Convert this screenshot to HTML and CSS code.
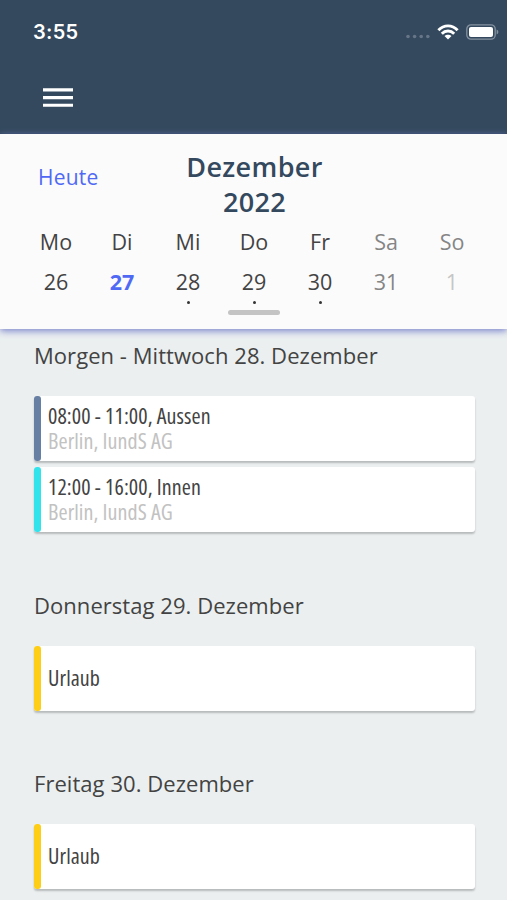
FILE: index.html
```html
<!DOCTYPE html>
<html lang="de">
<head>
<meta charset="utf-8">
<meta name="viewport" content="width=device-width, initial-scale=1">
<title>Kalender</title>
<link rel="stylesheet" href="styles.css">
</head>
<body>
<header class="topbar">
  <div class="status">
    <span class="clock">3:55</span>
    <div class="indicators">
      <svg class="signal" width="24" height="5" viewBox="0 0 24 5"><g fill="#667687"><circle cx="2" cy="2.5" r="1.8"/><circle cx="8.6" cy="2.5" r="1.8"/><circle cx="15.2" cy="2.5" r="1.8"/><circle cx="21.8" cy="2.5" r="1.8"/></g></svg>
      <svg class="wifi" width="22" height="16" viewBox="0 0 22 16"><g fill="none" stroke="#fff" stroke-width="2.9"><path d="M1.4 6.2C6.8.4 15.2.4 20.6 6.2"/><path d="M4.8 9.7C8.4 6 13.6 6 17.2 9.7"/></g><path d="M11 15.6L7.5 12.1C9.4 10.2 12.6 10.2 14.5 12.1Z" fill="#fff"/></svg>
      <svg class="battery" width="33" height="16" viewBox="0 0 33 16"><rect x=".8" y=".8" width="28.4" height="14.4" rx="4.2" fill="none" stroke="#8492a0" stroke-width="1.3"/><rect x="3" y="3" width="24" height="10" rx="2" fill="#fff"/><path d="M30.6 5.4Q32.4 6.2 32.4 8T30.6 10.6Z" fill="#8492a0"/></svg>
    </div>
  </div>
  <svg class="menu" width="30" height="20" viewBox="0 0 30 20"><path d="M0 1.9H30M0 9.6H30M0 17.2H30" stroke="#fff" stroke-width="3.1"/></svg>
</header>
<section class="calendar">
  <div class="calendar-head">
    <a class="today">Heute</a>
    <h1 class="month">Dezember<br>2022</h1>
  </div>
  <div class="week names"><span>Mo</span><span>Di</span><span>Mi</span><span>Do</span><span>Fr</span><span class="dim">Sa</span><span class="dim">So</span></div>
  <div class="week days"><span>26</span><span class="current">27</span><span class="marked">28</span><span class="marked">29</span><span class="marked">30</span><span class="dim">31</span><span class="faint">1</span></div>
  <div class="handle"></div>
</section>
<main class="agenda">
  <section class="day">
    <h2>Morgen - Mittwoch 28. Dezember</h2>
    <article class="card slate"><p>08:00 - 11:00, Aussen</p><p class="place">Berlin, IundS AG</p></article>
    <article class="card cyan"><p>12:00 - 16:00, Innen</p><p class="place">Berlin, IundS AG</p></article>
  </section>
  <section class="day">
    <h2>Donnerstag 29. Dezember</h2>
    <article class="card yellow"><p>Urlaub</p></article>
  </section>
  <section class="day">
    <h2>Freitag 30. Dezember</h2>
    <article class="card yellow"><p>Urlaub</p></article>
  </section>
</main>
</body>
</html>
```
FILE: styles.css
```css
* { box-sizing: border-box; }
body {
  margin: 0;
  height: 900px;
  overflow: hidden;
  background: #ebeff0;
  color: #434343;
  font-family: "Open Sans", "Noto Sans", sans-serif;
}
h1, h2, p { margin: 0; font-weight: 400; }
svg { display: block; }
.topbar { height: 134px; background: #34495e; border-bottom: 1px solid #2d4258; }
.status {
  display: flex;
  justify-content: space-between;
  height: 64px;
  padding: 0 8px 0 33px;
  align-items: center;
}
.clock { font: 600 20px/24px Inter, sans-serif; color: #fff; letter-spacing: .3px; }
.indicators { display: flex; align-items: center; }
.signal { margin: 9px 7px 0 0; }
.wifi { margin-right: 7px; }
.menu { margin: 24px 0 0 43px; }
.calendar {
  position: relative;
  height: 195px;
  background: #fbfbfc;
  box-shadow: 0 2px 7px #7a84cc;
}
.calendar-head { display: grid; grid-template-columns: 1fr 160px 1fr; height: 88px; padding: 15px 0 0; }
.today { padding: 14px 0 0 38px; font-size: 21px; line-height: 28px; color: #5069f5; letter-spacing: .2px; }
.month { font-size: 27px; font-weight: 600; line-height: 35px; text-align: center; color: #34495e; letter-spacing: .35px; margin-left: 2px; white-space: nowrap; }
.week { display: grid; grid-template-columns: repeat(7, 1fr); padding: 0 22px 0 23px; text-align: center; font-size: 21.5px; line-height: 40px; }
.week span { position: relative; }
.dim { color: #858585; }
.faint { color: #c6c6c6; }
.current { color: #5069f5; font-weight: 700; }
.marked::after { content: ""; position: absolute; left: 50%; top: 39px; width: 3px; height: 3px; margin-left: -1px; border-radius: 50%; background: #333; }
.handle { width: 52px; height: 5px; margin: 8px auto 0; border-radius: 3px; background: #c4c4c4; }
.agenda { padding: 11px 32px 0 34px; }
.day { margin-bottom: 57.2px; }
.day:last-child { margin-bottom: 0; }
h2 { font-size: 22px; line-height: 30px; margin-bottom: 26px; white-space: nowrap; letter-spacing: .05px; }
.card {
  position: relative;
  display: flex;
  flex-direction: column;
  justify-content: center;
  height: 65px;
  margin-bottom: 6.4px;
  padding: 0 0 1px 14px;
  border-radius: 3px;
  background: #fff;
  box-shadow: 0 2px 2px rgba(0, 0, 0, .22);
  font-size: 22px;
  line-height: 25px;
  letter-spacing: .07px;
  font-stretch: 75%;
}
.card:last-child { margin-bottom: 0; }
.card::before { content: ""; position: absolute; left: 0; top: 0; bottom: 0; width: 7px; border-radius: 3px; background: #667fa3; }
.cyan::before { background: #32e3ec; }
.yellow::before { background: #fdce15; }
.place { color: #c2c2c2; }
```
